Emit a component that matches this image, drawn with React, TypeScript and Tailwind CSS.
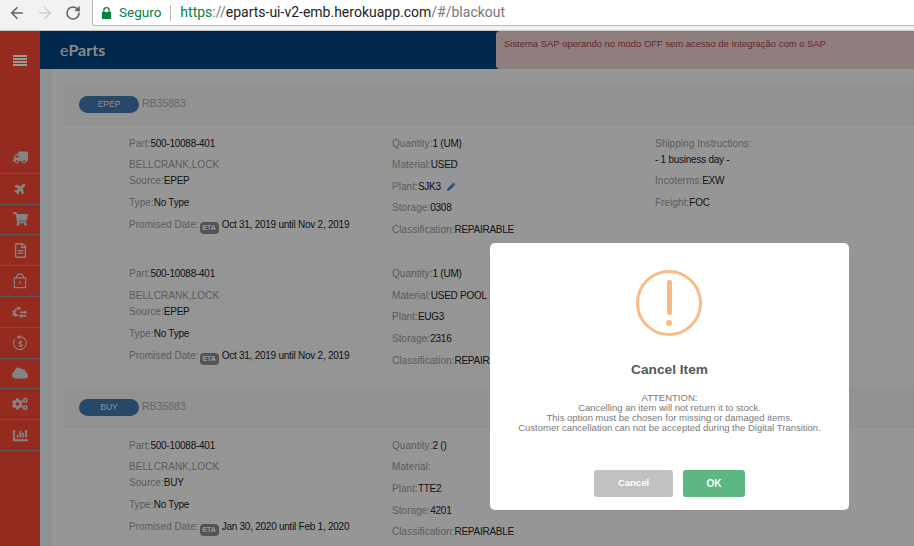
import React from 'react';
import { ArrowLeft, ArrowRight, RotateCw } from 'lucide-react';
import {
  FaTruck, FaPlane, FaShoppingCart, FaRegFileAlt, FaCloud, FaCogs, FaChartBar,
} from 'react-icons/fa';

function Line({ label, value, className = '' }: { label?: string; value?: React.ReactNode; className?: string }) {
  return (
    <div className={`h-4 text-[10px] leading-4 whitespace-nowrap ${className}`}>
      {label && <span className="text-[#999] tracking-[0.05px]">{label}</span>}
      {value && <span className="text-[#222] tracking-[-0.25px]">{value}</span>}
    </div>
  );
}

function Eta() {
  return (
    <span className="inline-block w-[19px] h-[12px] leading-[12px] rounded-[4px] bg-[#8c8c8c] text-white text-[7px] font-bold text-center align-[-2px] tracking-normal ml-px mr-[3px]">
      ETA
    </span>
  );
}

function Band({ tag }: { tag: string }) {
  return (
    <div className="h-[41px] bg-[#f4f4f4] border-b border-[#eee] flex items-center pl-[15px]">
      <span className="w-[60px] h-[17px] rounded-full bg-[#4279ae] text-[#eee] text-[8.500px] leading-[16px] text-center">{tag}</span>
      <span className="ml-[3px] text-[10.5px] text-[#aaa]">RB35883</span>
    </div>
  );
}

type RowData = {
  source: string; date: string; qty: string; material: string; plant: string; storage: string; edit?: boolean;
};

function Row({ d, ship, className = '' }: { d: RowData; ship?: string; className?: string }) {
  return (
    <div className={`flex h-[120px] ${className}`}>
      <div className="w-[328px] pl-[65px]">
        <Line label="Part:" value="500-10088-401" />
        <Line label="BELLCRANK,LOCK" className="mt-[5.600px]" />
        <Line label="Source:" value={d.source} />
        <Line label="Type:" value="No Type" className="mt-[6px]" />
        <Line label="Promised Date:" value={<><Eta />{d.date}</>} className="mt-[5.800px]" />
      </div>
      <div className="w-[263px]">
        <Line label="Quantity:" value={d.qty} />
        <Line label="Material:" value={d.material} className="mt-[5.600px]" />
        <div className="mt-[5.400px] h-4 text-[10px] leading-4 flex items-center">
          <span className="text-[#999] tracking-[0.05px]">Plant:</span>
          <span className="text-[#222] tracking-[-0.25px]">{d.plant}</span>
          {d.edit && (
            <svg viewBox="0 0 24 24" className="w-[10px] h-[10px] ml-[5px] fill-[#3b8be0]">
              <path d="M2 22l2-7L16 3l5 5L9 20zM18 1l5 5-1.500 1.500-5-5z" />
            </svg>
          )}
        </div>
        <Line label="Storage:" value={d.storage} className="mt-[5.800px]" />
        <Line label="Classification:" value="REPAIRABLE" className="mt-[5.800px]" />
      </div>
      {ship && (
        <div>
          <Line label="Shipping Instructions:" />
          <Line value={ship} />
          <Line label="Incoterms:" value="EXW" className="mt-[5.600px]" />
          <Line label="Freight:" value="FOC" className="mt-[5.600px]" />
        </div>
      )}
    </div>
  );
}

const first: RowData = { source: 'EPEP', date: 'Oct 31, 2019 until Nov 2, 2019', qty: '1 (UM)', material: 'USED', plant: 'SJK3', storage: '0308', edit: true };
const second: RowData = { source: 'EPEP', date: 'Oct 31, 2019 until Nov 2, 2019', qty: '1 (UM)', material: 'USED POOL', plant: 'EUG3', storage: '2316' };
const third: RowData = { source: 'BUY', date: 'Jan 30, 2020 until Feb 1, 2020', qty: '2 ()', material: '', plant: 'TTE2', storage: '4201' };

function BoxBack() {
  return (
    <svg viewBox="0 0 16 18" className="w-[14px] h-[16px] fill-none stroke-current">
      <path d="M1.500 5.500h13v11h-13zM4 5.500V3.500l2-2h4l2 2v2" strokeWidth="1.300" />
      <path d="M9 9l-2.500 2L9 13z" fill="currentColor" stroke="none" />
    </svg>
  );
}

function CogsSwap() {
  return (
    <svg viewBox="0 0 18 16" className="w-[16px] h-[14px] fill-current">
      <path d="M6 2l1.500.4.800-.8 1.500 1-.5 1 .8 1.200-2 .6A3 3 0 1 0 7.500 11l.5 1.700-1 .5-.6-.8-1.500.4-.3 1H3.400l-.3-1.200-1.300-.7-1 .5-.7-1.500.8-.8V8.400L0 7.600l.7-1.500 1.100.4 1.200-.9L3.200 4.400H5z" />
      <path d="M10 6.500h5V5l3 2.500-3 2.500V8.500h-5zM17 10.500h-5V9L9 11.500l3 2.500v-1.500h5z" transform="translate(-1 1)" />
    </svg>
  );
}

function DollarBack() {
  return (
    <svg viewBox="0 0 16 18" className="w-[15px] h-[17px] fill-none stroke-current">
      <path d="M5 3.400a6.800 6.800 0 1 1-3 2.200" strokeWidth="1.200" />
      <path d="M7.500 0.800L4 3.300l3.500 2z" fill="currentColor" stroke="none" />
      <text x="8" y="14" fontSize="9" fontFamily="'Liberation Sans', sans-serif" fontWeight="700" textAnchor="middle" fill="currentColor" stroke="none">$</text>
    </svg>
  );
}

const sideIcons = [
  <FaTruck className="w-[15px] h-[13px] -scale-x-100" />,
  <FaPlane className="w-[13px] h-[13px] -rotate-45" />,
  <FaShoppingCart className="w-[15px] h-[14px]" />,
  <FaRegFileAlt className="w-[13px] h-[15px]" />,
  <BoxBack />,
  <CogsSwap />,
  <DollarBack />,
  <FaCloud className="w-[16px] h-[14px]" />,
  <FaCogs className="w-[16px] h-[14px]" />,
  <FaChartBar className="w-[17px] h-[15px]" />,
];

export default function App() {
  return (
    <div className="relative h-[546px] w-[914px] overflow-hidden bg-white font-['Liberation_Sans',Arial,sans-serif]">
      {/* browser bar */}
      <div className="h-[31px] bg-[#f2f2f2] border-b border-[#c8c8c8] flex items-start">
        <div className="w-[92px] h-[25px] flex items-center pl-[8px] gap-[10px] text-[#5f6368]">
          <ArrowLeft size={18} strokeWidth={2.2} />
          <ArrowRight size={18} strokeWidth={2.2} className="text-[#d0d0d0]" />
          <RotateCw size={16} strokeWidth={2.4} className="ml-[1px]" />
        </div>
        <div className="flex-1 h-[26px] bg-white border-l border-b border-[#bdbdbd] rounded-bl-[3px] flex items-center pl-[9px] text-[14px] font-['Roboto',sans-serif]">
          <svg viewBox="0 0 9 12" className="w-[9px] h-[12px] fill-[#0b8043]">
            <path d="M0 5h1.200V3.300a3.300 3.300 0 0 1 6.600 0V5H9v7H0zM2.500 5h4V3.300a2 2 0 0 0-4 0z" />
          </svg>
          <span className="ml-[8px] text-[#0b8043] text-[13.5px]">Seguro</span>
          <span className="ml-[9px] mr-[9px] h-[16px] w-px bg-[#bbb]" />
          <span className="text-[#0b8043]">https</span>
          <span className="text-[#777]">://</span>
          <span className="text-[#222]">eparts-ui-v2-emb.herokuapp.com</span>
          <span className="text-[#777]">/#/blackout</span>
        </div>
      </div>

      {/* app */}
      <div className="relative flex h-[515px]">
        <aside className="w-[40px] shrink-0 bg-[#f94634] text-[#ddd] flex flex-col">
          <div className="h-[86px] pt-[24px] flex justify-center items-start">
            <div className="w-[14px] h-[11px] flex flex-col justify-between">
              <span className="h-[2px] bg-white" />
              <span className="h-[2px] bg-white" />
              <span className="h-[2px] bg-white" />
              <span className="h-[2px] bg-white" />
            </div>
          </div>
          <div className="h-[26px]" />
          {sideIcons.map((icon, i) => (
            <div key={i} className="h-[30.8px] shrink-0 border-b border-[#999] flex items-center justify-center">
              {icon}
            </div>
          ))}
        </aside>
        <main className="flex-1 min-w-0 bg-[#fbfbfb] flex flex-col">
          <header className="h-[38px] shrink-0 bg-[#00437f] flex">
            <span className="ml-[20px] leading-[38px] text-[16px] font-['Lato',sans-serif] font-bold text-[#e4e4e4]">
              <span className="font-normal">e</span>Parts
            </span>
            <div className="ml-auto w-[418px] bg-[#efd2d2] rounded-l-[4px] px-[8px] pt-[7px] text-[9.450px] text-[#a94442] leading-3">
              Sistema SAP operando no modo OFF sem acesso de Integração com o SAP
            </div>
          </header>
          <div className="flex flex-1 min-h-0">
            <div className="w-[12px] bg-[#ecf5f6]" />
            <div className="flex-1 pl-[12px] pt-[15px] min-w-0">
              <Band tag="EPEP" />
              <Row d={first} ship="- 1 business day -" className="pt-[10.7px] h-[132px]" />
              <Row d={second} className="pt-[9.4px] bg-[#f8f8f8] h-[130px]" />
              <Band tag="BUY" />
              <Row d={third} className="pt-[9.8px]" />
            </div>
          </div>
        </main>
      </div>

      {/* dim layer + dialog */}
      <div className="absolute inset-x-0 top-[31px] bottom-0 bg-black/40" />
      <div className="absolute left-[490px] top-[243px] w-[359px] h-[267px] bg-white rounded-[5px] flex flex-col items-center">
        <div className="mt-[27px] -ml-[1px] w-[66px] h-[66px] rounded-full border-[3px] border-[#f8bb86] flex flex-col items-center justify-center">
          <span className="w-[5px] h-[35px] rounded-[2px] bg-[#f8bb86]" />
          <span className="mt-[5px] w-[6px] h-[6px] rounded-full bg-[#f8bb86]" />
        </div>
        <h2 className="mt-[25px] text-[13.7px] leading-[18px] font-bold text-[#575757]">Cancel Item</h2>
        <div className="mt-[14px] text-[9.500px] leading-[10px] text-[#797979] text-center">
          <div>ATTENTION:</div>
          <div>Cancelling an item will not return it to stock.</div>
          <div>This option must be chosen for missing or damaged items.</div>
          <div>Customer cancellation can not be accepted during the Digital Transition.</div>
        </div>
        <div className="mt-[37px] flex gap-[10px]">
          <button className="w-[79px] h-[27px] rounded-[3px] bg-[#c1c1c1] text-white text-[9.500px] font-bold">Cancel</button>
          <button className="w-[62px] h-[27px] rounded-[3px] bg-[#5cb783] text-white text-[10px] font-bold">OK</button>
        </div>
      </div>
    </div>
  );
}
